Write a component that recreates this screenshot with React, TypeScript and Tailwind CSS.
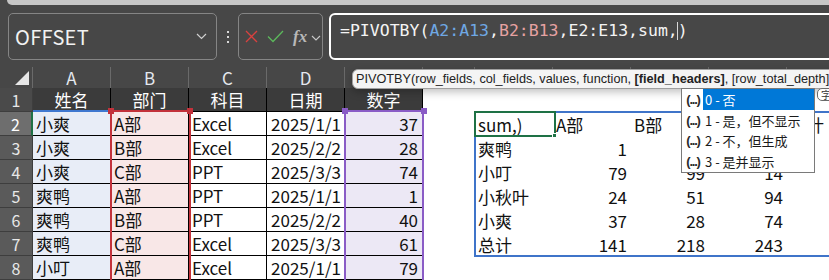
import React from "react";

const CJK = '"Noto Sans CJK SC", sans-serif';

const data = [
  ["小爽", "A部", "Excel", "2025/1/1", "37"],
  ["小爽", "B部", "Excel", "2025/2/2", "28"],
  ["小爽", "C部", "PPT", "2025/3/3", "74"],
  ["爽鸭", "A部", "PPT", "2025/1/1", "1"],
  ["爽鸭", "B部", "PPT", "2025/2/2", "40"],
  ["爽鸭", "C部", "Excel", "2025/3/3", "61"],
  ["小叮", "A部", "Excel", "2025/1/1", "79"],
];

const pivot = [
  ["sum,)", "A部", "B部", "C部", "总计"],
  ["爽鸭", "1", "40", "61", "102"],
  ["小叮", "79", "99", "14", "192"],
  ["小秋叶", "24", "51", "94", "169"],
  ["小爽", "37", "28", "74", "139"],
  ["总计", "141", "218", "243", "602"],
];

const colBg = ["bg-[#e8edf7]", "bg-[#f8e7e7]", "bg-white", "bg-white", "bg-[#ece8f5]"];
const colAlign = ["justify-start pl-[3px]", "justify-start pl-[3px]", "justify-start pl-[3px]", "justify-end pr-[3px]", "justify-end pr-[4px]"];

function RowHeader({ n, active, dark }: { n: number; active?: boolean; dark?: boolean }) {
  return (
    <div
      className={
        "w-[33px] shrink-0 h-full flex items-center justify-center text-[16px] border-b border-[#3e3e3e] " +
        (active
          ? "bg-[#6e6e6e] text-white border-r-2 border-r-[#1e7145]"
          : dark
          ? "bg-[#4a4a4a] text-[#e8e8e8] border-r border-r-[#3e3e3e]"
          : "bg-[#5a5a5a] text-[#e8e8e8] border-r border-r-[#3e3e3e]")
      }
    >
      {n}
    </div>
  );
}

function PivotCells({ r }: { r: number }) {
  const row = pivot[r];
  return (
    <>
      {row.map((v, i) => {
        const isNum = /^\d+$/.test(v);
        return (
          <div
            key={i}
            className={
              "w-[78px] shrink-0 h-full bg-white flex items-center whitespace-nowrap overflow-visible text-[#111] " +
              (isNum ? "justify-end pr-[4px]" : "justify-start pl-[3px]")
            }
          >
            {v}
          </div>
        );
      })}
      <div className="w-[78px] shrink-0 h-full bg-white" />
    </>
  );
}

function BlankRight() {
  return (
    <>
      {[0, 1, 2, 3, 4, 5].map((i) => (
        <div key={i} className="w-[78px] shrink-0 h-full bg-white" />
      ))}
    </>
  );
}

export default function App() {
  const letters = ["A", "B", "C", "D", "E", "F", "G", "H", "I", "J", "K", "L"];
  const widths = [78, 78, 78, 78, 78, 52, 78, 78, 78, 78, 78, 78];
  const wClass: Record<number, string> = { 78: "w-[78px]", 52: "w-[52px]" };

  return (
    <div
      className="w-[829px] h-[280px] overflow-hidden bg-[#474747] relative"
      style={{ fontFamily: CJK }}
    >
      {/* top strip */}
      <div className="h-[5px] ml-[7px] bg-[#c6c6c6] rounded-bl-[7px]" />

      {/* formula bar */}
      <div className="flex mt-[8px] h-[47px]">
        <div className="ml-[8px] w-[209px] shrink-0 border border-[#858585] rounded-[5px] flex items-center justify-between pl-[6px] pr-[9px]">
          <span className="text-[20px] text-[#f2f2f2] leading-none tracking-[0.3px]">OFFSET</span>
          <svg width="11" height="7" viewBox="0 0 11 7">
            <path d="M1 1 L5.5 5.5 L10 1" fill="none" stroke="#d0d0d0" strokeWidth="1.2" />
          </svg>
        </div>
        <div className="w-[21px] shrink-0 flex flex-col items-center justify-center gap-[3px]">
          <div className="w-[2px] h-[2px] bg-[#d8d8d8]" />
          <div className="w-[2px] h-[2px] bg-[#d8d8d8]" />
          <div className="w-[2px] h-[2px] bg-[#d8d8d8]" />
        </div>
        <div className="w-[85px] shrink-0 border border-[#858585] rounded-[5px] flex items-center pl-[6px]">
          <svg width="13" height="13" viewBox="0 0 13 13">
            <path d="M1 1 L12 12 M12 1 L1 12" stroke="#d9413f" strokeWidth="1.3" />
          </svg>
          <svg width="17" height="13" viewBox="0 0 17 13" className="ml-[9px]">
            <path d="M1 6.5 L6 11.5 L16 1" fill="none" stroke="#5cb85c" strokeWidth="1.3" />
          </svg>
          <span
            className="ml-[9px] text-[17px] italic font-bold text-[#b8b8b8] leading-none"
            style={{ fontFamily: '"Liberation Serif", serif' }}
          >
            fx
          </span>
          <svg width="10" height="6" viewBox="0 0 10 6" className="ml-[4px] mt-[2px]">
            <path d="M1 1 L5 5 L9 1" fill="none" stroke="#c8c8c8" strokeWidth="1.1" />
          </svg>
        </div>
        <div className="ml-[6px] flex-1 -mr-[20px] border-2 border-white rounded-[6px] flex items-start pt-[7px] pl-[9px]">
          <span
            className="text-[16.5px] text-[#f4f4f4] whitespace-nowrap leading-none"
            style={{ fontFamily: '"DejaVu Sans Mono", monospace' }}
          >
            =PIVOTBY(<span className="text-[#6fa8e4]">A2:A13</span>,
            <span className="text-[#e6a2a2]">B2:B13</span>,E2:E13,sum,
            <span className="inline-block w-[1px] h-[18px] bg-[#d8d8d8] align-middle -mx-[0.5px]" />)
          </span>
        </div>
      </div>

      {/* column headers */}
      <div className="mt-[7px] flex h-[21px] w-max">
        <div className="w-[33px] shrink-0 h-full flex items-end justify-end pr-[3px] pb-[3px] border-r border-[#6a6a6a]">
          <svg width="14" height="14" viewBox="0 0 14 14">
            <polygon points="14,0 14,14 0,14" fill="#e6e6e6" />
          </svg>
        </div>
        {letters.map((l, i) => (
          <div
            key={l}
            className={
              wClass[widths[i]] +
              " shrink-0 h-full border-r border-[#6a6a6a] flex items-center justify-center text-[17px] text-[#e4e8ee] leading-none"
            }
          >
            {l}
          </div>
        ))}
      </div>

      {/* grid rows */}
      <div className="w-max text-[17px] leading-none">
        {/* row 1 */}
        <div className="flex h-[24px]">
          <RowHeader n={1} dark />
          {["姓名", "部门", "科目", "日期", "数字"].map((h) => (
            <div
              key={h}
              className="w-[78px] shrink-0 h-full bg-[#3b3b3b] border-r border-b border-black flex items-center justify-center text-white"
            >
              {h}
            </div>
          ))}
          <div className="w-[52px] shrink-0 h-full bg-white" />
          <BlankRight />
        </div>
        {data.map((row, ri) => (
          <div key={ri} className="flex h-[24px]">
            <RowHeader n={ri + 2} active={ri === 0} />
            {row.map((v, ci) => (
              <div
                key={ci}
                className={
                  "w-[78px] shrink-0 h-full border-r border-b border-black flex items-center text-[#111] " +
                  colBg[ci] +
                  " " +
                  colAlign[ci]
                }
              >
                {v}
              </div>
            ))}
            <div className="w-[52px] shrink-0 h-full bg-white" />
            {ri < 6 ? <PivotCells r={ri} /> : <BlankRight />}
          </div>
        ))}
      </div>

      {/* range highlight: A (blue) */}
      <div className="absolute left-[33px] top-[110px] w-[78px] h-[2px] bg-[#3f78d0]" />
      {/* range highlight: B (red) */}
      <div className="absolute left-[110px] top-[110px] w-[81px] h-[200px] border-2 border-b-0 border-[#c3323b]" />
      <div className="absolute left-[108px] top-[108px] w-[6px] h-[6px] bg-[#c3323b]" />
      <div className="absolute left-[187px] top-[108px] w-[6px] h-[6px] bg-[#c3323b]" />
      {/* range highlight: E (purple) */}
      <div className="absolute left-[344px] top-[110px] w-[80px] h-[200px] border-2 border-b-0 border-[#8a5cc6]" />
      <div className="absolute left-[342px] top-[108px] w-[6px] h-[6px] bg-[#8a5cc6]" />
      <div className="absolute left-[421px] top-[108px] w-[6px] h-[6px] bg-[#8a5cc6]" />

      {/* spill range border */}
      <div className="absolute left-[474px] top-[111px] w-[420px] h-[146px] border-2 border-[#3f74c9]" />
      {/* active cell */}
      <div className="absolute left-[474px] top-[111px] w-[82px] h-[26px] border-2 border-[#1e7145]" />
      <div className="absolute left-[552px] top-[133px] w-[5px] h-[5px] bg-[#1e7145] border border-white" />

      {/* tooltip */}
      <div
        className="absolute left-[352px] top-[69px] w-[520px] h-[20px] bg-[#f4f4f4] border border-[#a0a0a0] rounded-[6px] shadow-[0_3px_8px_rgba(0,0,0,0.25)] flex items-center pl-[3px] text-[12.7px] text-[#222] whitespace-nowrap leading-none"
        style={{ fontFamily: '"Liberation Sans", sans-serif' }}
      >
        PIVOTBY(row_fields, col_fields, values, function,&nbsp;<b className="font-bold">[field_headers]</b>, [row_total_depth]
      </div>

      {/* 字 badge */}
      <div className="absolute left-[817px] top-[88px] w-[22px] h-[13px] rounded-[5px] border border-[#6a6a6a] bg-white flex items-center pl-[3px] text-[10px] text-[#333] leading-none">
        字
      </div>

      {/* dropdown */}
      <div className="absolute left-[681px] top-[88px] w-[134px] h-[85px] bg-white border border-[#7a7a7a] flex flex-col text-[13px] leading-none">
        {["0 - 否", "1 - 是，但不显示", "2 - 不，但生成", "3 - 是并显示"].map((t, i) => (
          <div key={i} className="h-[21px] flex items-stretch">
            <div
              className="w-[21px] shrink-0 flex items-center justify-center pl-[1px] text-[13px] font-bold text-[#2a2a2a] tracking-[-1.2px]"
              style={{ fontFamily: '"Liberation Sans", sans-serif' }}
            >
              (...)
            </div>
            <div
              className={
                "flex-1 flex items-center pl-[2px] whitespace-nowrap " +
                (i === 0 ? "bg-[#0078d7] text-white" : "text-[#1a1a1a]")
              }
            >
              {t}
            </div>
          </div>
        ))}
      </div>
    </div>
  );
}
